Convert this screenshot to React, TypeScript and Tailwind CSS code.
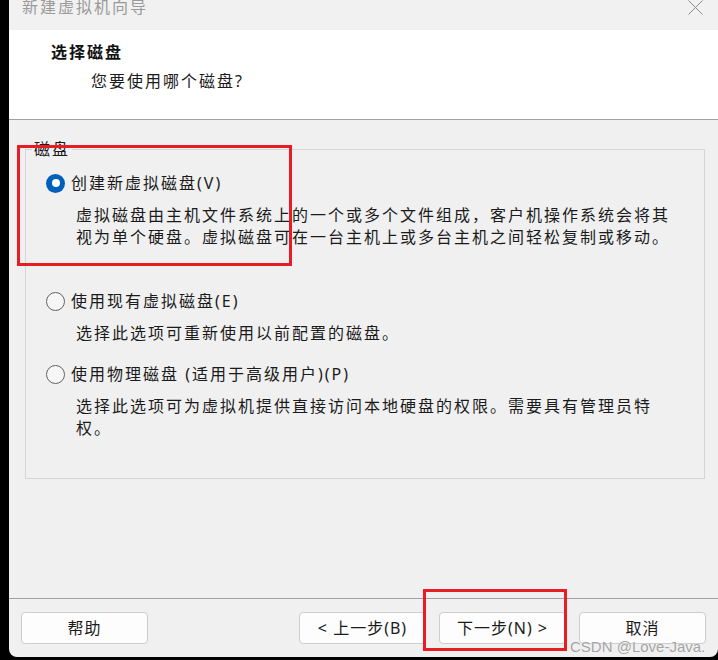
import React from "react";

const FONT = "font-['Noto_Sans','Noto_Sans_CJK_SC',sans-serif]";

function Radio({ checked }: { checked?: boolean }) {
  if (checked) {
    return (
      <span className="w-[19px] h-[19px] rounded-full bg-[#005fb8] flex items-center justify-center shrink-0">
        <span className="w-[8px] h-[8px] rounded-full bg-white" />
      </span>
    );
  }
  return (
    <span className="w-[19px] h-[19px] rounded-full border border-[#636363] bg-[#f6f6f6] shrink-0" />
  );
}

function Option({
  checked,
  label,
  lines,
  className,
}: {
  checked?: boolean;
  label: string;
  lines: string[];
  className: string;
}) {
  return (
    <div className={className}>
      <div className="flex items-center h-[24px]">
        <Radio checked={checked} />
        <span className="ml-[6px] leading-[24px] whitespace-nowrap">{label}</span>
      </div>
      <div className="mt-[9px] pl-[30px] leading-[22px]">
        {lines.map((l, i) => (
          <div key={i} className="whitespace-nowrap">
            {l}
          </div>
        ))}
      </div>
    </div>
  );
}

function Button({ children }: { children: React.ReactNode }) {
  return (
    <div className="w-[127px] h-[32px] rounded-[4px] border border-[#cdcdcd] bg-[#fdfdfd] flex items-center justify-center text-[16px] leading-[20px] tracking-[1px] text-[#1b1b1b] whitespace-nowrap">
      {children}
    </div>
  );
}

export default function App() {
  return (
    <div
      className={`relative w-[718px] h-[660px] bg-black flex overflow-hidden text-[16px] tracking-[2px] text-[#1b1b1b] ${FONT}`}
    >
      <div className="ml-[9px] w-[709px] h-[657px] flex flex-col bg-[#f0f0f0] rounded-bl-[8px] rounded-br-[8px] overflow-hidden">
        {/* title bar */}
        <div className="h-[30px] shrink-0 bg-[#f1f1f1] flex items-start justify-between pl-[13px] pr-[15px]">
          <span className="-mt-[1px] leading-[16px] text-[#9a9a9a] whitespace-nowrap">新建虚拟机向导</span>
          <svg width="15" height="15" viewBox="0 0 15 15" className="shrink-0">
            <path d="M0.5 0.5 L14.5 14.5 M14.5 0.5 L0.5 14.5" stroke="#8a8a8a" strokeWidth="1" fill="none" />
          </svg>
        </div>

        {/* header */}
        <div className="h-[90px] shrink-0 bg-white border-b border-[#a0a0a0] pl-[42px]">
          <div className="pt-[10px] leading-[24px] font-bold text-[#111]">选择磁盘</div>
          <div className="mt-[5px] pl-[40px] leading-[24px]">您要使用哪个磁盘?</div>
        </div>

        {/* body */}
        <div className="flex-1 pt-[19px] pl-[16px]">
          <fieldset className="w-[680px] h-[340px] border border-[#d5d5d5] p-0 m-0">
            <legend className="ml-[6px] px-[2px] leading-[20px] text-[#1b1b1b]">磁盘</legend>
            <div className="pl-[20px]">
              <Option
                checked
                className="mt-[12px]"
                label="创建新虚拟磁盘(V)"
                lines={[
                  "虚拟磁盘由主机文件系统上的一个或多个文件组成，客户机操作系统会将其",
                  "视为单个硬盘。虚拟磁盘可在一台主机上或多台主机之间轻松复制或移动。",
                ]}
              />
              <Option
                className="mt-[41px]"
                label="使用现有虚拟磁盘(E)"
                lines={["选择此选项可重新使用以前配置的磁盘。"]}
              />
              <Option
                className="mt-[18px]"
                label="使用物理磁盘 (适用于高级用户)(P)"
                lines={[
                  "选择此选项可为虚拟机提供直接访问本地硬盘的权限。需要具有管理员特",
                  "权。",
                ]}
              />
            </div>
          </fieldset>
        </div>

        {/* footer */}
        <div className="h-[59px] shrink-0 border-t border-[#a0a0a0] flex justify-between px-[12px] pt-[13px]">
          <Button>帮助</Button>
          <div className="flex gap-[13px]">
            <Button>&lt; 上一步(B)</Button>
            <Button>下一步(N) &gt;</Button>
            <Button>取消</Button>
          </div>
        </div>
      </div>

      {/* annotation boxes */}
      <div className="absolute left-[17px] top-[145px] w-[275px] h-[121px] border-[3px] border-[#e81c24]" />
      <div className="absolute left-[423px] top-[589px] w-[144px] h-[62px] border-[3px] border-[#e81c24]" />

      {/* watermark */}
      <div className="absolute left-[570px] top-[637px] text-[15px] leading-[20px] tracking-normal text-[#a3a3a3] font-['Liberation_Sans',sans-serif] whitespace-nowrap [text-shadow:0_0_1px_#ffffff]">
        CSDN @Love-Java.
      </div>
    </div>
  );
}
